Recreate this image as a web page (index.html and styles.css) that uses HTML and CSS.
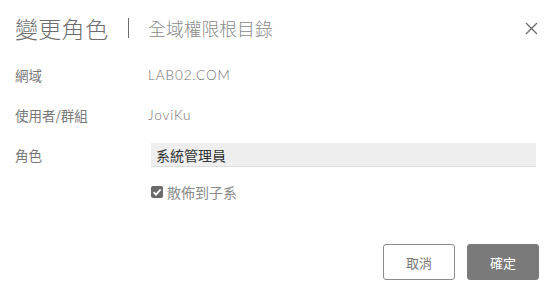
FILE: index.html
```html
<!DOCTYPE html>
<html>
<head>
<meta charset="utf-8">
<link rel="stylesheet" href="styles.css">
</head>
<body>
<div class="modal">
  <div class="header">
    <h1 class="title">變更角色</h1>
    <span class="sep"></span>
    <span class="subtitle">全域權限根目錄</span>
    <button class="close" aria-label="close">
      <svg width="13" height="13" viewBox="0 0 13 13"><path d="M1 1L12 12M12 1L1 12" stroke="#6f6f6f" stroke-width="1.4" fill="none"/></svg>
    </button>
  </div>
  <div class="form">
    <div class="row">
      <div class="label">網域</div>
      <div class="value">LAB02.COM</div>
    </div>
    <div class="row">
      <div class="label">使用者/群組</div>
      <div class="value">JoviKu</div>
    </div>
    <div class="row">
      <div class="label">角色</div>
      <div class="select">系統管理員</div>
    </div>
    <div class="row check-row">
      <div class="label"></div>
      <label class="check">
        <span class="box"><svg width="12" height="12" viewBox="0 0 12 12"><path d="M2.6 6.2L5 8.6L9.6 3.4" stroke="#fff" stroke-width="1.8" fill="none"/></svg></span>
        <span class="check-text">散佈到子系</span>
      </label>
    </div>
  </div>
  <div class="footer">
    <button class="btn btn-outline">取消</button>
    <button class="btn btn-primary">確定</button>
  </div>
</div>
</body>
</html>
```
FILE: styles.css
```css
* { box-sizing: border-box; }
html, body { margin: 0; padding: 0; background: #fff; }
body {
  font-family: "Lato", "Noto Sans CJK TC", sans-serif;
  color: #6b6b6b;
  width: 549px;
  height: 288px;
  overflow: hidden;
}
.modal {
  padding: 0 11px 0 15px;
}
.header {
  display: flex;
  align-items: center;
  height: 55px;
  padding-top: 1px;
}
.title {
  margin: 0;
  font-family: "Noto Sans CJK TC", sans-serif;
  font-weight: 300;
  font-size: 23px;
  color: #6e6e6e;
  letter-spacing: 0.3px;
}
.sep {
  width: 1px;
  height: 20px;
  background: #6e6e6e;
  margin: 0 19px 0 20px;
}
.subtitle {
  font-family: "Noto Sans CJK TC", sans-serif;
  font-weight: 300;
  font-size: 17.8px;
  color: #8a8a8a;
}
.close {
  margin-left: auto;
  background: none;
  border: 0;
  padding: 0;
  width: 13px;
  height: 13px;
  display: flex;
}
.form {
  display: flex;
  flex-direction: column;
}
.row {
  display: flex;
  align-items: center;
  height: 40px;
}
.label {
  width: 133px;
  flex: none;
  font-family: "Noto Sans CJK TC", sans-serif;
  font-size: 13.5px;
  color: #777;
}
.value {
  font-size: 13.5px;
  font-weight: 300;
  color: #707070;
  letter-spacing: 0.9px;
}
.select {
  flex: 1;
  margin-left: 3px;
  margin-right: 2px;
  height: 24px;
  background: #eeeeee;
  border-bottom: 1px solid #dcdcdc;
  display: flex;
  align-items: center;
  padding-left: 5px;
  font-family: "Noto Sans CJK TC", sans-serif;
  font-size: 14px;
  color: #333;
}
.check-row { height: 34px; }
.check {
  display: flex;
  align-items: center;
  margin-left: 3px;
}
.box {
  width: 12px;
  height: 12px;
  border-radius: 2px;
  background: #6a6a6a;
  display: flex;
}
.check-text {
  margin-left: 4px;
  font-family: "Noto Sans CJK TC", sans-serif;
  font-size: 14px;
  color: #8a8a8a;
}
.footer {
  display: flex;
  justify-content: flex-end;
  gap: 12px;
  margin-top: 35px;
  margin-right: -1px;
}
.btn {
  width: 72px;
  height: 36px;
  border-radius: 3px;
  font-family: "Noto Sans CJK TC", sans-serif;
  font-size: 13px;
}
.btn-outline {
  background: #fff;
  border: 1px solid #8a8a8a;
  color: #777;
}
.btn-primary {
  background: #7a7a7a;
  border: 1px solid #7a7a7a;
  color: #fff;
}
```
